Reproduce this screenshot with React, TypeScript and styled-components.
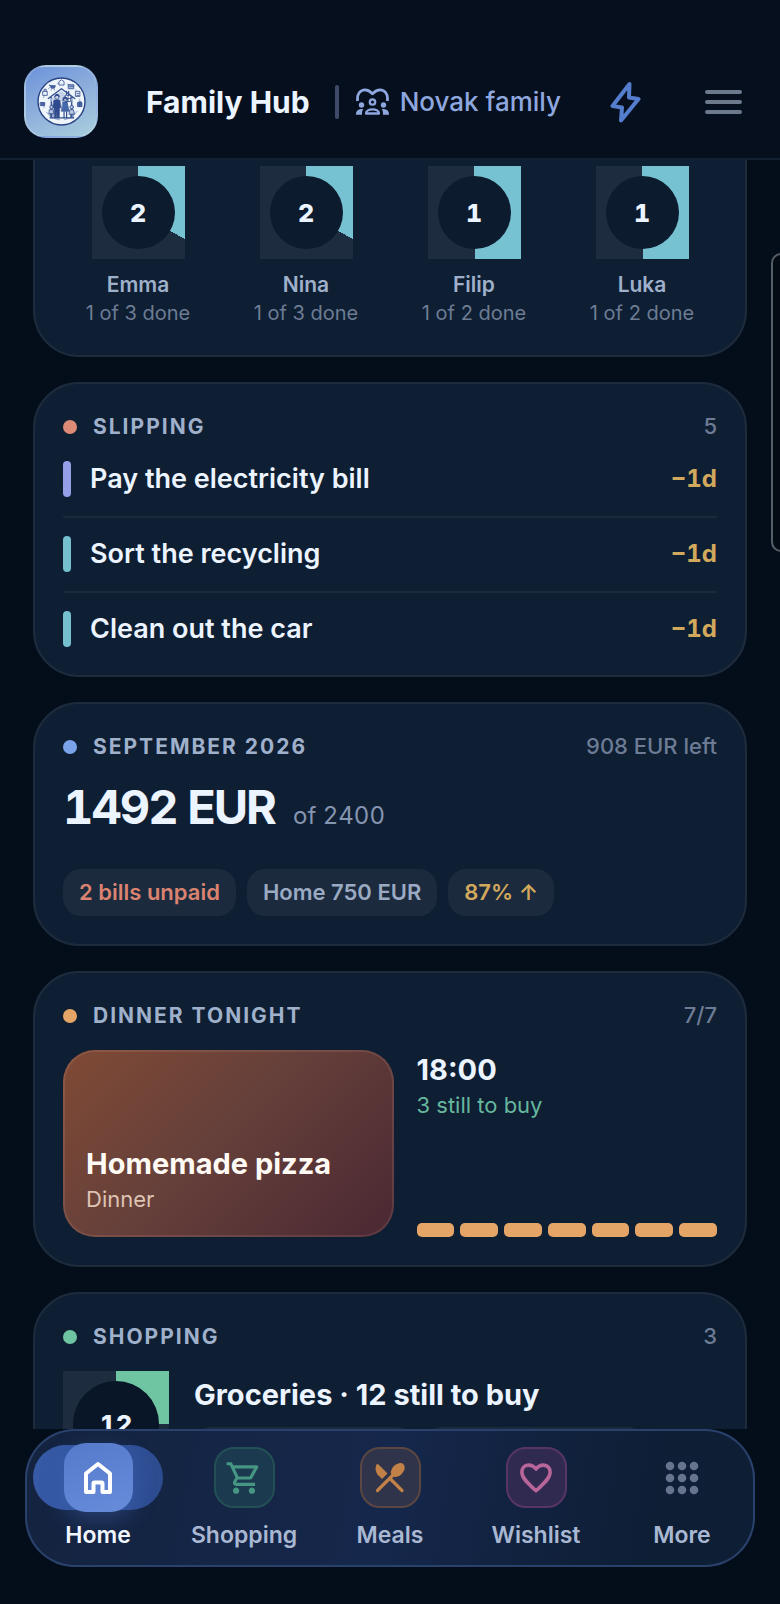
import { ReactNode, useState } from 'react';
import styled, { createGlobalStyle, css } from 'styled-components';
import { MdOutlineShoppingCart } from 'react-icons/md';

const GlobalStyle = createGlobalStyle`
  * {
    box-sizing: border-box;
  }

  body {
    margin: 0;
    background: #040e1b;
    color: #ecf4ff;
    font-family: Inter, "Liberation Sans", sans-serif;
    font-size: 22px;
  }

  h1, h2, p, ul {
    margin: 0;
    padding: 0;
    font-weight: inherit;
  }

  button {
    padding: 0;
    border: none;
    background: none;
    color: inherit;
    font: inherit;
    cursor: pointer;
  }
`;

const Page = styled.div`
  display: flex;
  flex-direction: column;
  height: 100vh;
  overflow: hidden;
`;

const Header = styled.header`
  display: flex;
  align-items: center;
  flex-shrink: 0;
  padding: 65px 38px 20px 24px;
  background: #050f1d;
  border-bottom: 2px solid #132031;
`;

const LogoLink = styled.a`
  display: flex;
  align-items: center;
  justify-content: center;
  width: 74px;
  height: 73px;
  margin-right: 48px;
  border: 2px solid rgba(255, 255, 255, 0.15);
  border-radius: 22px;
  background: linear-gradient(155deg, #6c93da 0%, #8fb0dc 50%, #a9cfdd 100%);
`;

const Title = styled.h1`
  font-size: 30px;
  line-height: 40px;
  font-weight: 700;
  white-space: nowrap;
`;

const Divider = styled.span`
  width: 4px;
  height: 34px;
  margin: 0 17px 0 25px;
  border-radius: 2px;
  background: #3d4b69;
`;

const FamilyButton = styled.button`
  display: flex;
  align-items: center;
  gap: 11px;
  color: #8fa7df;
  font-size: 26px;
  line-height: 40px;
  font-weight: 500;
  white-space: nowrap;
`;

const HeaderActions = styled.div`
  display: flex;
  flex: 1;
  align-items: center;
  justify-content: space-between;
  margin-left: 48px;
`;

const IconButton = styled.button`
  display: flex;
`;

const Main = styled.main`
  display: flex;
  flex: 1;
  flex-direction: column;
  gap: 25px;
  min-height: 0;
  padding: 0 33px;
  overflow: hidden;
`;

const Card = styled.section<{ $continued?: boolean }>`
  flex-shrink: 0;
  padding: 28px;
  border: 2px solid #1d2b3c;
  border-radius: 46px;
  background: #0e1e33;

  ${({ $continued }) => $continued && css`
    padding-top: 6px;
    border-top: none;
    border-top-left-radius: 0;
    border-top-right-radius: 0;
  `}
`;

const CardHead = styled.div`
  display: flex;
  align-items: center;
  margin-bottom: 20px;
  line-height: 29px;
`;

const Dot = styled.span<{ $color: string }>`
  width: 14px;
  height: 14px;
  margin-right: 16px;
  border-radius: 50%;
  background: ${({ $color }) => $color};
`;

const CardTitle = styled.h2`
  flex: 1;
  color: #9fb0cb;
  font-size: 21px;
  font-weight: 700;
  letter-spacing: 2px;
  text-transform: uppercase;
`;

const CardNote = styled.span`
  color: #6d7c94;
  font-size: 22px;
  font-weight: 500;
`;

const People = styled.ul`
  display: grid;
  grid-template-columns: repeat(4, 1fr);
  gap: 18px;
  list-style: none;
`;

const Person = styled.li`
  display: flex;
  flex-direction: column;
  align-items: center;
`;

const Ring = styled.div<{ $size: number; $done: number; $color: string; $hole: string }>`
  display: flex;
  flex-shrink: 0;
  width: ${({ $size }) => $size}px;
  height: ${({ $size }) => $size}px;
  padding: 10px;
  background: ${({ $done, $color }) => `conic-gradient(${$color} ${$done}%, #1e2c3f 0)`};

  & > span {
    display: flex;
    flex: 1;
    align-items: center;
    justify-content: center;
    border-radius: 50%;
    background: ${({ $hole }) => $hole};
    font-size: 25px;
    font-weight: 800;
    font-variant-numeric: tabular-nums;
  }
`;

const PersonName = styled.p`
  margin-top: 11px;
  color: #9fb0cb;
  font-size: 21px;
  line-height: 30px;
  font-weight: 600;
`;

const PersonNote = styled.p`
  color: #6d7c94;
  font-size: 20px;
  line-height: 27px;
`;

const Tasks = styled.ul`
  list-style: none;
`;

const Task = styled.li`
  display: flex;
  align-items: center;
  padding-bottom: 19px;
  font-size: 27px;
  line-height: 36px;
  font-weight: 600;

  & + & {
    padding-top: 18px;
    border-top: 2px solid #1a293c;
  }

  &:last-child {
    padding-bottom: 0;
  }
`;

const TaskBar = styled.span<{ $color: string }>`
  width: 8px;
  height: 36px;
  margin-right: 19px;
  border-radius: 4px;
  background: ${({ $color }) => $color};
`;

const TaskName = styled.span`
  flex: 1;
`;

const TaskDelay = styled.span`
  color: #d2a95c;
  font-size: 24px;
  font-weight: 700;
  font-variant-numeric: tabular-nums;
`;

const Amount = styled.p`
  display: flex;
  align-items: baseline;
  gap: 18px;
  font-size: 47px;
  line-height: 52px;
  font-weight: 700;
  letter-spacing: -2px;
  font-variant-numeric: tabular-nums;

  & small {
    color: #8595b0;
    font-size: 24px;
    line-height: 30px;
    font-weight: 400;
    letter-spacing: 0;
  }
`;

const Chips = styled.div`
  display: flex;
  gap: 11px;
  margin-top: 36px;
`;

const Chip = styled.span<{ $color?: string }>`
  height: 47px;
  padding: 0 16px;
  border-radius: 18px;
  background: #1c2a3e;
  color: ${({ $color }) => $color || '#9aaac2'};
  font-size: 22px;
  line-height: 47px;
  font-weight: 600;
`;

const Dinner = styled.div`
  display: grid;
  grid-template-columns: 1.1fr 1fr;
  gap: 23px;
`;

const Meal = styled.div`
  display: flex;
  flex-direction: column;
  justify-content: flex-end;
  height: 187px;
  padding: 21px;
  border: 2px solid rgba(255, 190, 170, 0.12);
  border-radius: 32px;
  background: linear-gradient(135deg, #804a35 0%, #66403a 45%, #4a2833 100%) border-box;
  color: #fffaf4;
`;

const Lead = styled.p`
  font-size: 29px;
  line-height: 40px;
  font-weight: 700;
`;

const Sub = styled.p<{ $color: string }>`
  color: ${({ $color }) => $color};
  font-size: 22px;
  line-height: 30px;
`;

const Week = styled.div`
  display: grid;
  grid-template-columns: repeat(7, 1fr);
  gap: 6px;
  margin-top: auto;

  & span {
    height: 14px;
    border-radius: 5px;
    background: #e5a566;
  }
`;

const Column = styled.div`
  display: flex;
  flex: 1;
  flex-direction: column;
`;

const Shopping = styled.div`
  display: flex;
  gap: 25px;

  & ${Column} {
    padding-top: 4px;
  }

  & ${Chips} {
    margin-top: 12px;
  }
`;

const ListChip = styled(Chip)`
  flex: 0 1 220px;
`;

const SideHandle = styled.div`
  position: fixed;
  top: 253px;
  right: -12px;
  width: 21px;
  height: 299px;
  border: 2px solid #575e67;
  border-radius: 10px;
  background: #030b15;
`;

const TabBar = styled.nav`
  display: flex;
  flex-shrink: 0;
  height: 138px;
  margin: 0 25px 37px;
  border-radius: 50px;
  background: linear-gradient(100deg, #14233f 0%, #15274b 50%, #0e1e35 85%);
  box-shadow: inset 0 0 0 2px #2a416b;
`;

const Tab = styled.button<{ $active: boolean }>`
  display: flex;
  flex: 1;
  flex-direction: column;
  align-items: center;
  padding-top: 16px;
  color: ${({ $active }) => ($active ? '#f1f6ff' : '#a9b8d2')};
  font-size: 23px;
  line-height: 28px;
  font-weight: 600;
`;

const TabPill = styled.span<{ $active: boolean }>`
  display: flex;
  align-items: center;
  justify-content: center;
  width: 130px;
  height: 65px;
  margin-bottom: 11px;
  border-radius: 33px;
  background: ${({ $active }) => ($active ? 'linear-gradient(100deg, #375ba8, #2c4b8e)' : 'none')};
`;

const TabIcon = styled.span<{ $active: boolean; $color: string; $tint: string; $line: string }>`
  display: flex;
  flex-shrink: 0;
  align-items: center;
  justify-content: center;
  width: 61px;
  height: 61px;
  border: 2px solid ${({ $line }) => $line};
  border-radius: 20px;
  background: ${({ $tint }) => $tint};
  color: ${({ $color }) => $color};

  ${({ $active }) => $active && css`
    width: 69px;
    height: 69px;
    border: none;
    border-radius: 22px;
    background: linear-gradient(160deg, #557acb, #668cda);
    box-shadow: 0 8px 22px rgba(72, 112, 200, 0.35);
    color: #fff;
  `}
`;

const FamilyLogo = () => (
  <svg width="49" height="49" viewBox="0 0 48 48" fill="none" stroke="#33508f" strokeLinecap="round" strokeLinejoin="round">
    <circle cx="24" cy="24" r="23" fill="#eef5fb" stroke="#2b4585" strokeWidth="1.4" />
    <circle cx="24" cy="24" r="18" strokeWidth="0.7" strokeDasharray="5 5" stroke="#7890bd" />
    <path d="M11 21 24 11.5 37 21M14 20v19M34 20v19M13 40h23" strokeWidth="1.3" />
    <path d="M14 21 24 13.5 34 21v3H14z" fill="#c3d2e8" stroke="none" />
    <path d="M29 14v3M31 14v4" strokeWidth="1.2" />
    <path d="M28 18h5v6h-5zM30.500 18v6M28 21h5" fill="#fff" strokeWidth="0.8" />
    <g fill="#eaf2fb" strokeWidth="0.8">
      <path d="M21.500 7.500v-3l2.500-1.800 2.500 1.800v3z" />
      <path d="M31 7.500h5v4h-5zM31 9h5" fill="#9fb2d6" />
      <path d="M38 14h4v5h-4zM39 16h2M39 18h2" />
      <path d="M6 14h4v4H6zM7 14v-2h2v2" />
    </g>
    <g fill="#4d66a8" strokeWidth="0.8">
      <path d="M12 8h1l1 3h3l1-2.500h-5M14 12.500v.2M17 12.500v.2" />
      <path d="M3.500 25h4v3h-4z" />
      <path d="M40 25h4v4h-4zM42 25v4M41 24l1 1 1-1" />
    </g>
    <g fill="#2f4b8d" stroke="#2b4585" strokeWidth="0.6">
      <circle cx="19.500" cy="19.500" r="2.100" fill="#d6dfee" />
      <path d="M17.500 19c.3-3 4-3 4.200 0-1.500-1-2.700-1-4.200 0z" />
      <path d="M16.500 23c1-1 5-1 6 0l.8 7-1.300.5L21.800 40h-2l-.3-7-.4 7h-2L16.800 30.500 15.300 30z" />
      <circle cx="27.500" cy="21.500" r="2" fill="#d6dfee" />
      <path d="M25.400 23c-.5-4.500 4.800-4.500 4.500 0-1-2-3-2.600-4.500 0z" />
      <path d="M25.500 24.500h4l1.800 9H24z" fill="#4668ad" />
      <path d="M26.500 34v6M29 34v6" strokeWidth="1.100" />
    </g>
    <g fill="#b9c8e2" strokeWidth="0.8">
      <circle cx="14.200" cy="29.500" r="1.700" />
      <path d="M12.500 32h3.500l.4 4H12zM13 36v4M15.600 36v4" />
      <circle cx="34" cy="29.500" r="1.700" />
      <path d="M32.500 32h3.200l1 4.500h-5zM33 36.500V40M35.300 36.500V40" />
    </g>
  </svg>
);

const FamilyIcon = () => (
  <svg width="33" height="28" viewBox="0 0 33 28" fill="none" stroke="currentColor" strokeWidth="2.800" strokeLinejoin="round">
    <path d="M1.700 13C.5 6 4.500 1.800 9 1.800c3 0 5 1.200 7.500 4 2.500-2.800 4.500-4 7.500-4 4.500 0 8.500 4.200 7.300 11.200" />
    <circle cx="16.500" cy="14" r="2.700" strokeWidth="2.300" />
    <path d="M10 25.500c0-2.700 3-4.200 6.500-4.200s6.500 1.500 6.500 4.200z" strokeWidth="2.300" />
    <g fill="currentColor" stroke="none">
      <circle cx="5.500" cy="17" r="2.700" />
      <circle cx="27.500" cy="17" r="2.700" />
      <path d="M0 26.700c0-4 2-5.700 7.200-5.700-1 1.300-1.300 3.500-1.200 5.700zM33 26.700c0-4-2-5.700-7.200-5.700 1 1.300 1.300 3.500 1.200 5.700z" />
    </g>
  </svg>
);

const BoltIcon = () => (
  <svg width="32" height="44" viewBox="0 0 32 44" fill="none" stroke="#557dcd" strokeWidth="4" strokeLinejoin="round">
    <path d="M20.500 4 3.500 26l9.500 1.500L12 40.500 29.500 19l-9.500-1.500z" />
  </svg>
);

const MenuIcon = () => (
  <svg width="37" height="26" viewBox="0 0 37 26" stroke="#6c788b" strokeWidth="4" strokeLinecap="round">
    <path d="M2 3h33M2 13h33M2 23h33" />
  </svg>
);

const HomeIcon = () => (
  <svg width="32" height="34" viewBox="0 0 32 34" fill="none" stroke="currentColor" strokeWidth="4" strokeLinejoin="round">
    <path d="M4 12.500 16 3l12 9.500V31h-7.500v-8.500a1 1 0 0 0-1-1h-7a1 1 0 0 0-1 1V31H4z" />
  </svg>
);

const MealsIcon = () => (
  <svg width="30" height="30" viewBox="0 0 30 30" fill="currentColor">
    <path d="M1.500 1.500C-.5 6 1 10 3.500 12.500L7 16l5.500-5.500L3.500 1.500c-.7-.7-1.600-.7-2 0z" />
    <ellipse cx="22.800" cy="7" rx="5.600" ry="8" transform="rotate(45 22.800 7)" />
    <path d="M20 10 2.500 27.500M15.500 16 27 27.500" stroke="currentColor" strokeWidth="3.200" strokeLinecap="round" />
  </svg>
);

const HeartIcon = () => (
  <svg width="34" height="32" viewBox="0 0 36 34" fill="none" stroke="currentColor" strokeWidth="3.800" strokeLinejoin="round">
    <path d="M18 7.500C15.500 4 12.500 3.300 10 3.300 5.500 3.300 3 6.800 3 11c0 7 8 13 15 19.500C25 24 33 18 33 11c0-4.200-2.500-7.700-7-7.700-2.500 0-5.500.7-8 4.200z" />
  </svg>
);

const DotsIcon = () => (
  <svg width="34" height="34" viewBox="0 0 34 34" fill="currentColor">
    {[5, 17, 29].map(y => [5, 17, 29].map(x => <circle key={`${x}-${y}`} cx={x} cy={y} r="4.300" />))}
  </svg>
);

const people = [
  { name: 'Emma', left: 2, done: 1, total: 3 },
  { name: 'Nina', left: 2, done: 1, total: 3 },
  { name: 'Filip', left: 1, done: 1, total: 2 },
  { name: 'Luka', left: 1, done: 1, total: 2 },
];

const tasks = [
  { name: 'Pay the electricity bill', delay: '−1d', color: '#949fe8' },
  { name: 'Sort the recycling', delay: '−1d', color: '#75c0cf' },
  { name: 'Clean out the car', delay: '−1d', color: '#75c0cf' },
];

const tabs = [
  { name: 'Home', icon: <HomeIcon />, color: '#fff', tint: 'none', line: 'transparent' },
  { name: 'Shopping', icon: <MdOutlineShoppingCart size={38} />, color: '#459682', tint: '#1b394f', line: '#235055' },
  { name: 'Meals', icon: <MealsIcon />, color: '#c28147', tint: '#30344a', line: '#5b4641' },
  { name: 'Wishlist', icon: <HeartIcon />, color: '#b8659a', tint: '#302a51', line: '#573564' },
  { name: 'More', icon: <DotsIcon />, color: '#66748f', tint: 'none', line: 'transparent' },
];

interface CardHeaderProps {
  title: string;
  color: string;
  note: ReactNode;
}

const CardHeader = ({ title, color, note }: CardHeaderProps) => (
  <CardHead>
    <Dot $color={color} />
    <CardTitle>{title}</CardTitle>
    <CardNote>{note}</CardNote>
  </CardHead>
);

const App = () => {
  const [activeTab, setActiveTab] = useState('Home');

  return (
    <Page>
      <GlobalStyle />
      <Header>
        <LogoLink href="#home" aria-label="Family Hub"><FamilyLogo /></LogoLink>
        <Title>Family Hub</Title>
        <Divider />
        <FamilyButton type="button">
          <FamilyIcon />
          Novak family
        </FamilyButton>
        <HeaderActions>
          <IconButton type="button" aria-label="Quick actions"><BoltIcon /></IconButton>
          <IconButton type="button" aria-label="Menu"><MenuIcon /></IconButton>
        </HeaderActions>
      </Header>

      <Main>
        <Card $continued>
          <People>
            {people.map(({ name, left, done, total }) => (
              <Person key={name}>
                <Ring $size={93} $done={(done / total) * 100} $color="#77c2d2" $hole="#0c1b2e"><span>{left}</span></Ring>
                <PersonName>{name}</PersonName>
                <PersonNote>{done} of {total} done</PersonNote>
              </Person>
            ))}
          </People>
        </Card>

        <Card>
          <CardHeader title="Slipping" color="#dc8b76" note={tasks.length + 2} />
          <Tasks>
            {tasks.map(({ name, delay, color }) => (
              <Task key={name}>
                <TaskBar $color={color} />
                <TaskName>{name}</TaskName>
                <TaskDelay>{delay}</TaskDelay>
              </Task>
            ))}
          </Tasks>
        </Card>

        <Card>
          <CardHeader title="September 2026" color="#7ba3ea" note="908 EUR left" />
          <Amount>1492 EUR <small>of 2400</small></Amount>
          <Chips>
            <Chip $color="#d98370">2 bills unpaid</Chip>
            <Chip>Home 750 EUR</Chip>
            <Chip $color="#d2a95c">87% ↑</Chip>
          </Chips>
        </Card>

        <Card>
          <CardHeader title="Dinner tonight" color="#e5a566" note="7/7" />
          <Dinner>
            <Meal>
              <Lead>Homemade pizza</Lead>
              <Sub $color="#dfc3b4">Dinner</Sub>
            </Meal>
            <Column>
              <Lead>18:00</Lead>
              <Sub $color="#66b79e">3 still to buy</Sub>
              <Week>
                {[1, 2, 3, 4, 5, 6, 7].map(day => <span key={day} />)}
              </Week>
            </Column>
          </Dinner>
        </Card>

        <Card>
          <CardHeader title="Shopping" color="#6fc5a2" note="3" />
          <Shopping>
            <Ring $size={106} $done={25} $color="#6fc5a2" $hole="#081628"><span>12</span></Ring>
            <Column>
              <Lead>Groceries · 12 still to buy</Lead>
              <Chips>
                <ListChip />
                <ListChip />
              </Chips>
            </Column>
          </Shopping>
        </Card>
      </Main>

      <SideHandle />

      <TabBar>
        {tabs.map(({ name, icon, color, tint, line }) => {
          const active = name === activeTab;
          return (
            <Tab key={name} type="button" $active={active} onClick={() => setActiveTab(name)}>
              <TabPill $active={active}>
                <TabIcon $active={active} $color={color} $tint={tint} $line={line}>{icon}</TabIcon>
              </TabPill>
              {name}
            </Tab>
          );
        })}
      </TabBar>
    </Page>
  );
};

export default App;
